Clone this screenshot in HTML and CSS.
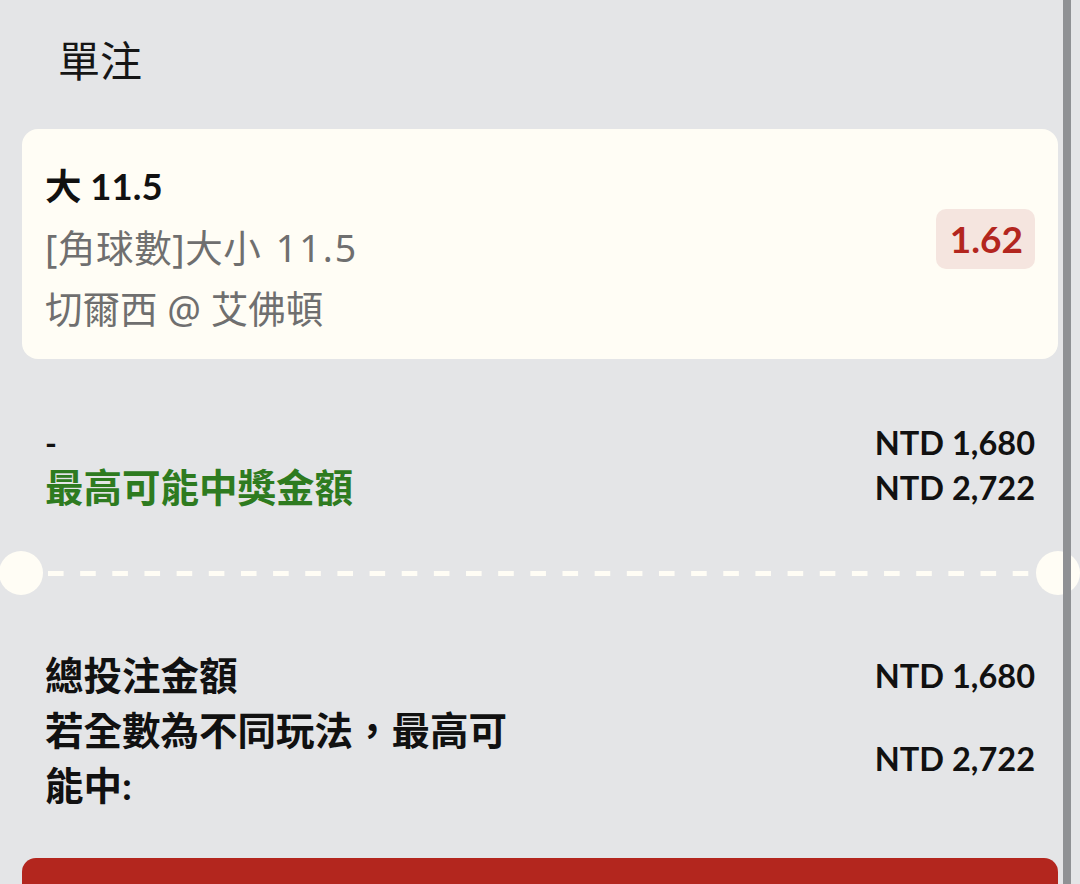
FILE: index.html
```html
<!DOCTYPE html>
<html lang="zh-Hant">
<head>
<meta charset="utf-8">
<title>單注</title>
<link rel="stylesheet" href="styles.css">
</head>
<body>
<div class="screen">
  <div class="sheet">
    <h1 class="title">單注</h1>

    <div class="card">
      <div class="card-info">
        <div class="sel">大 11.5</div>
        <div class="market">[角球數]大小 <span class="num">11.5</span></div>
        <div class="match">切爾西 @ 艾佛頓</div>
      </div>
      <div class="odds">1.62</div>
    </div>

    <div class="summary">
      <div class="sum-left">
        <div class="dash-label">-</div>
        <div class="green">最高可能中獎金額</div>
      </div>
      <div class="sum-right">
        <div>NTD 1,680</div>
        <div>NTD 2,722</div>
      </div>
    </div>

    <div class="divider">
      <span class="notch notch-left"></span>
      <span class="dashes"></span>
      <span class="notch notch-right"></span>
    </div>

    <div class="totals">
      <div class="t-label">總投注金額</div>
      <div class="t-amount">NTD 1,680</div>
      <div class="t-label t-wrap">若全數為不同玩法，最高可能中:</div>
      <div class="t-amount">NTD 2,722</div>
    </div>

    <button class="submit" aria-label="投注"></button>
  </div>
  <div class="scrollbar"></div>
</div>
</body>
</html>
```

FILE: styles.css
```css
html, body {
  margin: 0;
  padding: 0;
  overflow: hidden;
  background: #e4e5e7;
}

body {
  font-family: "Lato", "Noto Sans CJK TC", sans-serif;
  color: #111111;
}

.screen {
  position: relative;
  width: 1080px;
  height: 884px;
  overflow: hidden;
}

.sheet {
  padding: 0 22px;
}

.title {
  margin: 0;
  padding: 38px 0 0 36px;
  font-family: "Noto Sans CJK TC", sans-serif;
  font-weight: 400;
  font-size: 42px;
  line-height: 42px;
  color: #161616;
}

.card {
  margin-top: 49px;
  background: #fffdf5;
  border-radius: 16px;
  padding: 27px 23px 20px 23px;
  display: flex;
  align-items: center;
  justify-content: space-between;
}

.card-info {
  display: flex;
  flex-direction: column;
}

.sel {
  font-weight: 700;
  font-size: 36.5px;
  line-height: 61px;
  color: #111111;
}

.market,
.match {
  font-family: "Noto Sans", "Noto Sans CJK TC", sans-serif;
  font-size: 37.5px;
  line-height: 61px;
  color: #6f6f6f;
}

.market {
  letter-spacing: 0.6px;
}

.market .num {
  margin-left: 4px;
  letter-spacing: 2px;
}

.odds {
  margin-bottom: 17px;
  height: 60px;
  line-height: 60px;
  padding: 0 12px 0 14px;
  border-radius: 10px;
  background: #f5e5df;
  color: #b3261e;
  font-weight: 700;
  font-size: 37px;
}

.summary {
  margin-top: 61px;
  padding: 0 23px;
  display: flex;
  justify-content: space-between;
}

.sum-left,
.sum-right {
  display: flex;
  flex-direction: column;
}

.dash-label {
  font-weight: 700;
  font-size: 32px;
  line-height: 45px;
}

.green {
  font-weight: 700;
  font-size: 38.5px;
  line-height: 45px;
  color: #2e7b20;
}

.sum-right {
  align-items: flex-end;
  font-weight: 700;
  font-size: 32.5px;
  line-height: 45px;
}

.divider {
  margin: 41px -22px 0 -22px;
  height: 44px;
  display: flex;
  align-items: center;
}

.notch {
  width: 44px;
  height: 44px;
  border-radius: 50%;
  background: #fffdf5;
  flex: 0 0 44px;
}

.notch-left {
  margin-left: -1px;
}

.dashes {
  flex: 1;
  height: 5px;
  margin: 0 6px 0 5px;
  background-image: linear-gradient(to right, #fffdf5 0, #fffdf5 16px, transparent 16px);
  background-size: 32.17px 5px;
  background-repeat: repeat-x;
}

.totals {
  margin-top: 53px;
  padding: 0 23px;
  display: grid;
  grid-template-columns: 1fr auto;
  align-items: center;
}

.t-label {
  font-weight: 700;
  font-size: 38.5px;
  line-height: 55px;
  color: #111111;
}

.t-wrap {
  max-width: 480px;
}

.t-amount {
  font-weight: 700;
  font-size: 32.5px;
  line-height: 55px;
  text-align: right;
}

.totals .t-amount:nth-child(2) {
  align-self: start;
}

.submit {
  display: block;
  width: 100%;
  margin-top: 45px;
  height: 130px;
  border: 0;
  border-radius: 14px;
  background: #b3261e;
}

.scrollbar {
  position: absolute;
  top: 0;
  bottom: 0;
  left: 1063px;
  width: 8px;
  background: #8f9194;
}
```
